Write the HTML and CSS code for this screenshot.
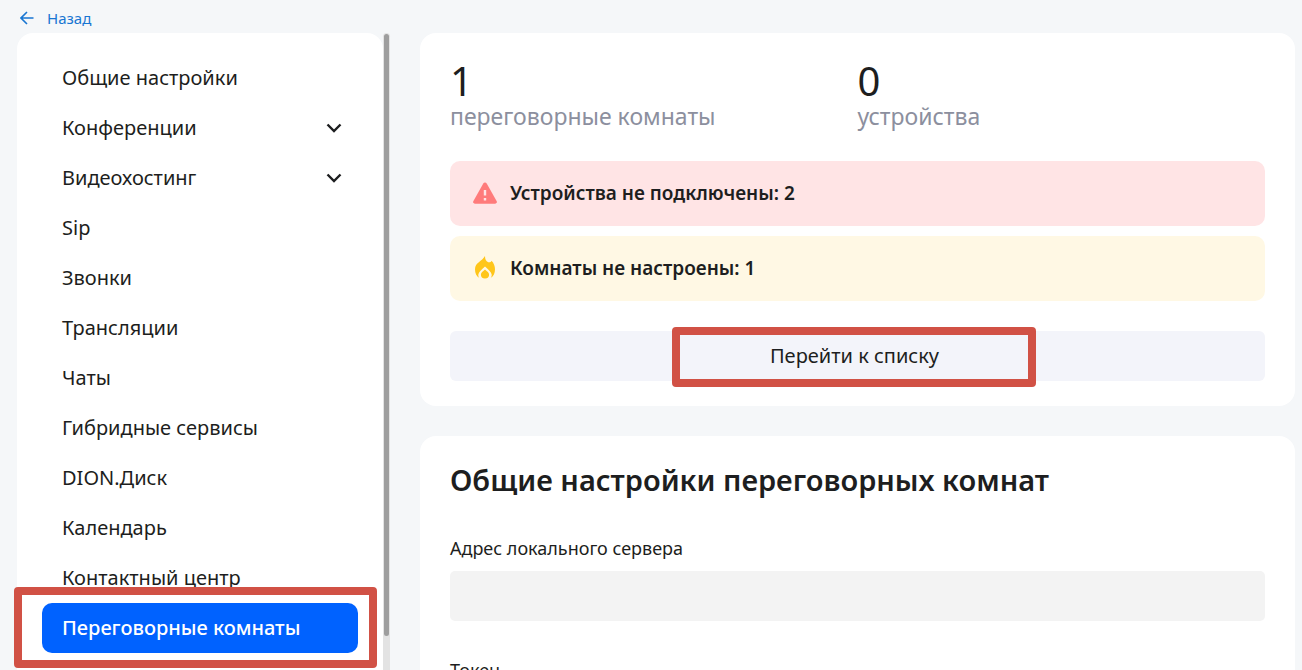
FILE: index.html
```html
<!DOCTYPE html>
<html lang="ru">
<head>
    <meta charset="UTF-8">
    <meta name="viewport" content="width=device-width, initial-scale=1.0">
    <title>Переговорные комнаты</title>
    <link rel="stylesheet" href="styles.css">
</head>
<body>
    <header class="topbar">
        <a href="#" class="back-link">
            <svg class="back-icon" viewBox="0 0 14 14" aria-hidden="true">
                <path d="M13.5 7H1.2M7 1L1 7l6 6"/>
            </svg>
            Назад
        </a>
    </header>

    <div class="layout">
        <div class="sidebar">
            <nav class="menu">
                <a href="#" class="menu-item">Общие настройки</a>
                <button type="button" class="menu-item">
                    Конференции
                    <svg class="chevron" viewBox="0 0 16 10" aria-hidden="true"><path d="M1.5 1.5L8 8l6.500-6.500"/></svg>
                </button>
                <button type="button" class="menu-item">
                    Видеохостинг
                    <svg class="chevron" viewBox="0 0 16 10" aria-hidden="true"><path d="M1.5 1.5L8 8l6.500-6.500"/></svg>
                </button>
                <a href="#" class="menu-item">Sip</a>
                <a href="#" class="menu-item">Звонки</a>
                <a href="#" class="menu-item">Трансляции</a>
                <a href="#" class="menu-item">Чаты</a>
                <a href="#" class="menu-item">Гибридные сервисы</a>
                <a href="#" class="menu-item">DION.Диск</a>
                <a href="#" class="menu-item">Календарь</a>
                <a href="#" class="menu-item">Контактный центр</a>
                <a href="#" class="menu-item active">
                    Переговорные комнаты
                    <span class="frame frame-menu"></span>
                </a>
            </nav>
            <div class="scroll-track">
                <div class="scroll-thumb"></div>
            </div>
        </div>

        <main class="content">
            <section class="card">
                <div class="stats">
                    <div class="stat">
                        <div class="stat-number">1</div>
                        <div class="stat-label">переговорные комнаты</div>
                    </div>
                    <div class="stat">
                        <div class="stat-number">0</div>
                        <div class="stat-label">устройства</div>
                    </div>
                </div>

                <div class="alerts">
                    <div class="alert alert-danger">
                        <svg class="alert-icon" viewBox="0 0 24 24" aria-hidden="true">
                            <path fill="#ff7b7b" d="M10.300 2.500a2 2 0 0 1 3.400 0L23.700 20.200a1.700 1.700 0 0 1-1.500 2.500H1.800a1.700 1.700 0 0 1-1.500-2.500z"/>
                            <path fill="#ffe4e5" d="M10.800 9h2.400v5.500h-2.400zM10.800 17h2.400v2.500h-2.400z"/>
                        </svg>
                        Устройства не подключены: 2
                    </div>
                    <div class="alert alert-warning">
                        <svg class="alert-icon" viewBox="0 0 24 24" aria-hidden="true">
                            <path fill="#ffc61a" d="M12 0c0 3 1 5.500 3.200 6.200 1.600.5 2.800-.2 3.300-1.500C20.800 7 22 10 22 13.200c0 4-1.400 7-4.400 8.800.9-1.200 1.300-2.400 1-3.800-.5-2.700-3-4.500-6.600-7.800-3.600 3.300-6.100 5.100-6.600 7.800-.3 1.400.1 2.600 1 3.800C3.400 20.200 2 17.200 2 13.200 2 6.500 9 5.500 12 0z"/>
                            <path fill="#ffc61a" d="M12 13.500c2.300 2 4.100 3.200 4.100 5.300a4.100 3.700 0 0 1-8.200 0c0-2.100 1.800-3.300 4.100-5.300z"/>
                        </svg>
                        Комнаты не настроены: 1
                    </div>
                </div>

                <button type="button" class="list-button">
                    <span class="list-label">
                        Перейти к списку
                        <span class="frame frame-list"></span>
                    </span>
                </button>
            </section>

            <section class="card">
                <h2 class="card-title">Общие настройки переговорных комнат</h2>
                <div class="field">
                    <label for="server">Адрес локального сервера</label>
                    <input type="text" id="server" class="text-box">
                </div>
                <div class="field">
                    <label for="token">Токен</label>
                    <input type="text" id="token" class="text-box">
                </div>
            </section>
        </main>
    </div>
</body>
</html>
```
FILE: styles.css
```css
* {
    box-sizing: border-box;
    font-family: "Noto Sans", "Open Sans", sans-serif;
}

body {
    margin: 0;
    height: 100vh;
    overflow: hidden;
    display: flex;
    flex-direction: column;
    background-color: #f5f7f9;
    color: #1d1e20;
}

.topbar {
    flex: none;
    height: 33px;
    padding: 8px 20px 0;
}

.back-link {
    display: inline-flex;
    align-items: center;
    gap: 13px;
    color: #1976d2;
    font-size: 15px;
    line-height: 19px;
    text-decoration: none;
}

.back-icon {
    width: 14px;
    height: 14px;
    fill: none;
    stroke: currentColor;
    stroke-width: 1.6;
}

.layout {
    display: flex;
    align-items: flex-start;
    gap: 30px;
    padding: 0 7px 0 17px;
}

/* left menu */
.sidebar {
    display: flex;
    flex: none;
    width: 373px;
}

.menu {
    flex: 1;
    padding: 20px 25px 50px;
    background-color: #fff;
    border-radius: 16px;
}

.menu-item {
    position: relative;
    display: flex;
    align-items: center;
    justify-content: space-between;
    width: 100%;
    height: 50px;
    padding: 0 16px 1px 20px;
    border: none;
    border-radius: 10px;
    background: none;
    color: inherit;
    font-size: 20px;
    text-decoration: none;
    cursor: pointer;
}

.menu-item.active {
    background-color: #0062ff;
    color: #fff;
    font-weight: 500;
}

.chevron {
    width: 16px;
    height: 10px;
    fill: none;
    stroke: #1d1e20;
    stroke-width: 2.4;
}

.scroll-track {
    width: 7px;
    padding: 1px;
    background-color: #e3e3e3;
    border-radius: 4px;
}

.scroll-thumb {
    height: 602px;
    background-color: #9e9e9e;
    border-radius: 3px;
}

/* red frames over the page */
.frame {
    position: absolute;
    border: 8px solid #d15145;
    border-radius: 4px;
    pointer-events: none;
}

.frame-menu {
    top: -16px;
    right: -19px;
    bottom: -15px;
    left: -28px;
}

.frame-list {
    top: -15px;
    right: -97px;
    bottom: -18px;
    left: -98px;
}

/* right column */
.content {
    flex: 1;
    display: flex;
    flex-direction: column;
    gap: 30px;
}

.card {
    padding: 25px 30px;
    background-color: #fff;
    border-radius: 16px;
}

.stats {
    display: grid;
    grid-template-columns: 1fr 1fr;
    margin-bottom: 32px;
}

.stat-number {
    font-size: 40px;
    line-height: 45px;
}

.stat-label {
    color: #8c8f9e;
    font-size: 23px;
    line-height: 26px;
}

.alerts {
    display: flex;
    flex-direction: column;
    gap: 10px;
    margin-bottom: 30px;
}

.alert {
    display: flex;
    align-items: center;
    gap: 13px;
    height: 65px;
    padding: 0 23px 1px;
    border-radius: 10px;
    font-size: 19px;
    font-weight: 600;
}

.alert-icon {
    width: 24px;
    height: 24px;
}

.alert-danger {
    background-color: #ffe4e5;
}

.alert-warning {
    background-color: #fff8e4;
}

.list-button {
    display: block;
    width: 100%;
    height: 50px;
    padding: 0 6px 2px 0;
    border: none;
    border-radius: 6px;
    background-color: #f3f4fa;
    color: inherit;
    font-size: 20px;
    cursor: pointer;
}

.list-label {
    position: relative;
    display: inline-block;
}

.card-title {
    margin: 0 0 38px;
    font-size: 29px;
    font-weight: 600;
    line-height: 37px;
}

.field {
    margin-bottom: 37px;
}

.field label {
    display: block;
    margin-bottom: 10px;
    font-size: 18px;
    line-height: 25px;
}

.text-box {
    display: block;
    width: 100%;
    height: 50px;
    padding: 0 16px;
    border: none;
    border-radius: 5px;
    background-color: #f3f3f3;
    font-size: 18px;
}
```
